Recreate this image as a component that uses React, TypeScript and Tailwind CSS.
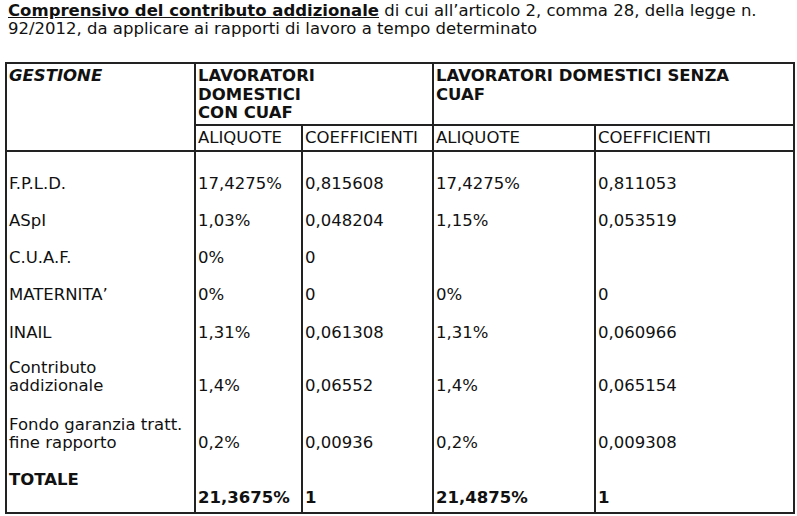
const rows: { label: string[]; a1: string; c1: string; a2: string; c2: string; h: string }[] = [
  { label: ['F.P.L.D.'], a1: '17,4275%', c1: '0,815608', a2: '17,4275%', c2: '0,811053', h: 'h-[42px]' },
  { label: ['ASpI'], a1: '1,03%', c1: '0,048204', a2: '1,15%', c2: '0,053519', h: 'h-[37px]' },
  { label: ['C.U.A.F.'], a1: '0%', c1: '0', a2: '', c2: '', h: 'h-[37px]' },
  { label: ['MATERNITA’'], a1: '0%', c1: '0', a2: '0%', c2: '0', h: 'h-[37px]' },
  { label: ['INAIL'], a1: '1,31%', c1: '0,061308', a2: '1,31%', c2: '0,060966', h: 'h-[38px]' },
  { label: ['Contributo', 'addizionale'], a1: '1,4%', c1: '0,06552', a2: '1,4%', c2: '0,065154', h: 'h-[53px]' },
  { label: ['Fondo garanzia tratt.', 'fine rapporto'], a1: '0,2%', c1: '0,00936', a2: '0,2%', c2: '0,009308', h: 'h-[57px]' },
];

const cell = 'border-x-2 border-[#222] pl-[2px] align-bottom';

export default function App() {
  return (
    <div className="h-[516px] w-[797px] overflow-hidden bg-white font-['DejaVu_Sans',Verdana,sans-serif] text-[16.5px] leading-[18px] text-[#111]">
      <p className="whitespace-nowrap pl-[8px] pt-[2px]">
        <span className="font-bold underline">Comprensivo del contributo addizionale</span> di cui all’articolo 2, comma 28, della legge n.
        <br />
        92/2012, da applicare ai rapporti di lavoro a tempo determinato
      </p>
      <table className="ml-[5px] mt-[24px] w-[788px] table-fixed border-collapse border-2 border-[#222]">
        <colgroup>
          <col className="w-[189px]" />
          <col className="w-[107px]" />
          <col className="w-[131px]" />
          <col className="w-[162px]" />
          <col className="w-[199px]" />
        </colgroup>
        <thead>
          <tr className="h-[62px]">
            <th rowSpan={2} className="border-2 border-[#222] pl-[2px] pt-[3px] text-left align-top font-bold italic">
              GESTIONE
            </th>
            <th colSpan={2} className="border-2 border-[#222] pl-[2px] pt-[3px] text-left align-top font-bold leading-[18.5px]">
              LAVORATORI
              <br />
              DOMESTICI
              <br />
              CON CUAF
            </th>
            <th colSpan={2} className="border-2 border-[#222] pl-[2px] pt-[3px] text-left align-top font-bold leading-[18.5px]">
              LAVORATORI DOMESTICI SENZA
              <br />
              CUAF
            </th>
          </tr>
          <tr className="h-[26px]">
            <th className="border-2 border-[#222] pl-[2px] text-left font-normal">ALIQUOTE</th>
            <th className="whitespace-nowrap border-2 border-[#222] pl-[2px] text-left font-normal">COEFFICIENTI</th>
            <th className="border-2 border-[#222] pl-[2px] text-left font-normal">ALIQUOTE</th>
            <th className="border-2 border-[#222] pl-[2px] text-left font-normal">COEFFICIENTI</th>
          </tr>
        </thead>
        <tbody>
          {rows.map((r) => (
            <tr key={r.label[0]} className={r.h}>
              <td className={cell}>
                {r.label.map((l, i) => (
                  <div key={i} className="whitespace-nowrap">
                    {l}
                  </div>
                ))}
              </td>
              <td className={cell}>{r.a1}</td>
              <td className={cell}>{r.c1}</td>
              <td className={cell}>{r.a2}</td>
              <td className={cell}>{r.c2}</td>
            </tr>
          ))}
          <tr className="h-[61px] font-bold">
            <td className={`${cell} pb-[5px]`}>
              <div>TOTALE</div>
              <div>&nbsp;</div>
            </td>
            <td className={`${cell} pb-[5px]`}>21,3675%</td>
            <td className={`${cell} pb-[5px]`}>1</td>
            <td className={`${cell} pb-[5px]`}>21,4875%</td>
            <td className={`${cell} pb-[5px]`}>1</td>
          </tr>
        </tbody>
      </table>
    </div>
  );
}
